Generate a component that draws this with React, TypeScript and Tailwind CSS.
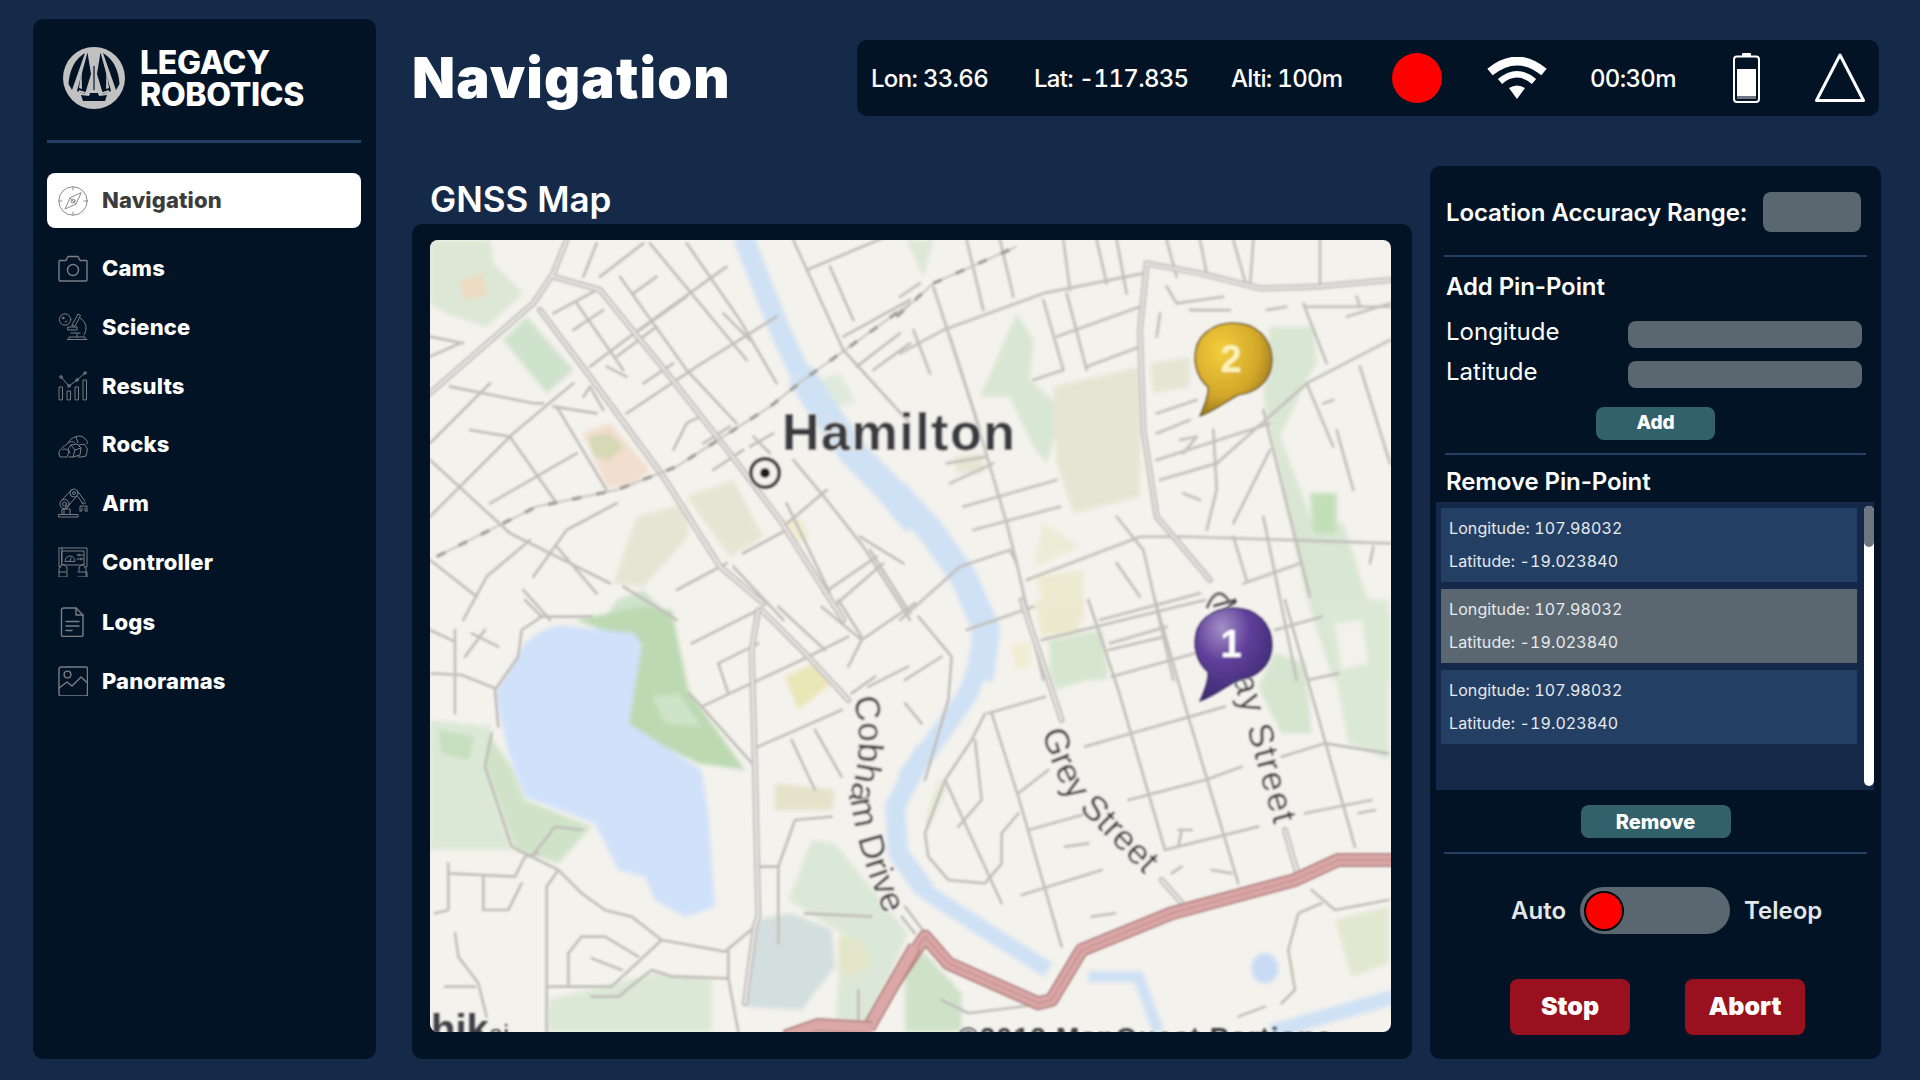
import React from "react";

type Poly = [string, string];
type Region = {
  x: number;
  y: number;
  parks: Poly[];
  water: [string, number][];
  roads: string[];
  doubles: string[];
};

const GREEN = "#d5e5cf";
const BEIGE = "#e6e5d3";

const regions: Region[] = [
  {
    x: 410,
    y: 170,
    parks: [
      ["60,210 240,210 250,280 340,370 230,470 110,430 60,400", "#dce7d5"],
      ["150,330 220,310 230,380 160,390", "#ecdcc4"],
      ["280,510 350,440 490,600 410,670", "#cfe2cc"],
      ["520,790 600,760 720,900 660,950 590,950", "#f1dece"],
      ["535,800 600,790 640,830 600,870 550,860", "#d6d8b6"],
      ["680,1040 830,1000 835,1100 700,1250 610,1240", BEIGE],
      ["830,980 970,930 1060,1100 960,1160", BEIGE],
      ["1120,1060 1170,1040 1200,1100 1160,1120", "#f0ecd0"],
      ["580,1350 620,1290 700,1260 790,1350", "#cfe2cc"],
      ["1190,640 1290,610 1340,700 1240,720", "#dfeadb"],
    ],
    water: [
      ["M1000 200 L1050 330 L1110 480 L1170 610", 62],
      ["M1170 610 L1240 720 L1330 850 L1430 950 L1520 1060", 85],
    ],
    roads: [
      "430,430 560,360", "540,590 700,470 950,290", "570,320 700,220", "650,730 860,590 1100,440",
      "670,370 740,320", "690,480 830,380", "430,710 560,730", "120,650 370,700 400,700",
      "500,400 640,600", "630,320 830,600 980,760", "720,220 1010,570", "830,220 990,450 1100,640",
      "60,820 240,640", "60,1040 310,790 490,640", "60,870 300,1090 600,1240", "300,800 440,1000",
      "240,1000 500,850", "440,710 590,960", "370,1220 470,1080 620,1000", "160,1350 230,1220 360,1110",
      "60,560 150,520", "60,500 160,520", "520,680 540,650 580,720", "790,840 830,760 870,740",
      "1150,210 1300,540 1500,760", "1190,300 1500,170", "1260,290 1330,450", "1300,500 1500,390",
      "1340,590 1470,490", "1390,600 1500,520", "1150,870 1250,990 1360,1130 1500,1350", "1130,1000 1260,1270",
      "1120,1070 1250,960", "1240,1270 1400,1160", "1270,1310 1420,1180", "1350,1100 1480,1180",
      "1380,1140 1500,1330", "1020,830 1090,790", "1030,800 1080,850", "340,1260 420,1350", "940,430 1020,510",
      "800,1260 950,1180", "970,1190 1120,1350", "640,1250 800,1350", "590,590 650,620",
      "490,480 580,420", "620,560 740,470", "700,640 790,580", "880,820 960,770", "910,900 1000,840",
      "560,220 520,320", "60,1170 200,1280", "180,780 300,800", "440,1130 560,1270", "1000,1150 1130,1080",
    ],
    doubles: [
      "430,320 570,360 780,620 960,850 1110,1050 1300,1350",
      "390,420 540,620 760,920 930,1190 1060,1300",
      "60,670 370,400 430,310 470,210",
    ],
  },
  {
    x: 900,
    y: 230,
    parks: [
      ["20,30 100,30 70,140", "#dce7d5"],
      ["350,250 400,330 390,450 490,540 440,700 400,650 330,500 240,500", "#d9e6d3"],
      ["460,470 720,410 720,800 520,850 470,700", BEIGE],
      ["750,400 870,380 870,470 760,490", BEIGE],
      ["1110,290 1240,290 1250,400 1220,450 1140,620 1240,880 1330,880 1400,1100 1470,1150 1470,1350 1300,1350 1220,1100 1090,500", "#d9e6d3"],
      ["1230,790 1310,790 1310,910 1240,910", "#c2dfba"],
      ["410,1040 550,1020 550,1170 440,1210", "#ecebd0"],
      ["430,880 540,950 400,1010", "#ecebd6"],
      ["450,1230 590,1210 620,1350 450,1350", GREEN],
      ["160,680 250,670 250,730 170,730", BEIGE],
    ],
    water: [["M-20 780 L90 900 L190 1040 L260 1200 L240 1350", 80]],
    roads: [
      "0,370 130,300 430,190 730,130", "470,320 720,230", "560,410 720,350", "100,170 220,540 320,880 350,1000 430,1350",
      "150,320 240,600", "430,210 490,420", "500,190 560,420", "490,30 510,180", "590,30 620,160", "400,450 490,420",
      "770,550 890,510", "770,610 870,570", "770,690 1110,580", "780,750 950,700 1220,460 1470,330",
      "940,600 950,780 920,900", "850,790 900,810", "840,630 890,620 850,670", "1000,880 1110,660",
      "1090,540 1230,1100", "1220,460 1300,650", "220,900 480,830", "380,1050 720,920 860,920 1470,940",
      "650,860 730,960 820,1350", "600,1170 900,1090", "630,1240 800,1190", "0,1170 180,1010 330,960 350,1000",
      "1000,920 1040,1050", "1090,860 1190,1350", "1030,1060 1200,1000", "1380,410 1470,700", "1220,230 1470,230",
      "1370,200 1380,230", "1210,220 1280,400", "1310,600 1360,780", "1100,240 1160,230", "870,240 990,240",
      "800,170 830,220 970,200", "1000,30 1040,170", "1060,30 1050,170", "1260,30 1260,170", "780,250 770,320",
      "1270,520 1300,510", "0,200 60,160", "1410,1000 1420,950", "140,700 260,680",
      "200,30 250,240", "300,30 340,200", "650,30 680,190", "800,30 830,140", "900,30 920,130",
      "150,760 280,700", "190,830 470,750", "400,1130 200,1200", "40,300 90,430", "1340,260 1470,220",
      "650,1000 720,1100",
    ],
    doubles: [
      "740,100 720,300 730,600 770,860 930,1050",
      "740,100 900,130 1080,175 1250,170 1470,150",
    ],
  },
  {
    x: 425,
    y: 600,
    parks: [
      ["15,360 200,380 180,500 260,750 15,750", "#dbe8d5"],
      ["40,390 150,410 130,480 50,460", "#c6dfbe"],
      ["190,400 180,500 270,750 400,790 500,680 300,600 260,500", "#d0e3c8"],
      ["450,60 650,20 740,30 790,270 960,510 820,490 700,430 610,380 650,130", "#bcd9b2"],
      ["680,290 760,280 830,380 720,370", "#cfe3c7"],
      ["370,1295 370,1200 690,1120 860,1135 860,1295", "#dbe8d5"],
      ["1090,900 1160,720 1230,730 1450,1000 1320,1295 1230,1295 1250,1000", "#dce8d7"],
      ["990,960 1100,940 1220,990 1230,1100 1130,1230 960,1220", "#d3dfde"],
      ["1240,1010 1310,1020 1340,1090 1280,1130 1240,1110", "#e3e5c8"],
      ["1080,230 1170,190 1220,250 1120,330", "#e9e6b8"],
      ["1050,550 1230,570 1220,630 1050,630", "#e4e2c9"],
    ],
    water: [["M1500 450 L1410 620 L1420 760 L1500 870", 60]],
    roads: [
      "20,220 110,225 210,265", "90,90 90,340", "15,90 90,125", "120,170 180,90", "140,100 220,140",
      "350,50 290,90 280,170 210,270 220,380", "200,400 180,500 260,740 400,810 470,880 540,930 620,950 710,1020 900,1055 990,980",
      "320,770 390,680 470,690", "70,790 70,930 30,940", "70,820 270,830 300,770 340,760", "175,830 175,930 250,930 290,850",
      "365,1295 365,860 400,810", "365,1160 560,1160 710,1020", "430,1160 430,1060 470,1010 540,1010 640,1070", "500,1075 590,1110",
      "500,1190 580,1190 680,1110 740,1130 910,1135", "910,1055 910,1135 940,1295", "90,1000 100,1070 160,1150 185,1250", "60,1160 150,1160",
      "990,800 1060,800 1060,950", "1060,800 1110,660 1220,650", "800,130 1000,30", "880,190 1000,130", "880,190 910,280",
      "830,320 1130,180 1270,110", "790,280 830,320 990,500", "1000,440 1250,330", "1100,420 1170,570", "1170,390 1250,530",
      "1190,20 1310,120 1470,10", "1270,200 1310,120", "1330,260 1450,200", "1280,280 1350,230", "1060,20 1200,150", "1240,0 1310,110",
      "1300,1170 1300,1270", "300,0 350,50 500,50", "1140,940 1340,950", "1060,950 1060,1030", "1430,950 1470,1000",
    ],
    doubles: ["1010,30 1150,170 1270,300", "1000,30 980,150 990,500 1000,950 990,980 960,1210"],
  },
  {
    x: 905,
    y: 600,
    parks: [
      ["430,120 590,90 610,220 450,270", GREEN],
      ["1060,260 1110,160 1200,190 1220,400 1130,400", GREEN],
      ["1250,0 1450,0 1450,480 1330,430", "#dbe8d5"],
      ["1290,70 1370,60 1390,190 1310,210", "#f3f1ec"],
      ["1290,960 1450,920 1450,1090 1340,1130", "#e2e7cf"],
      ["0,1080 60,1060 170,1180 170,1295 0,1295", "#cfe2c8"],
      ["320,130 380,130 370,200 330,210", "#f1edd2"],
      ["390,0 540,0 520,100 410,110", "#ece9cf"],
      ["60,660 100,540 130,560 70,680", "#e5ebd6"],
    ],
    water: [
      ["M210 0 Q260 100 190 280 Q110 400 0 540", 60],
      ["M-20 760 L70 880 L240 990 L430 1110", 48],
      ["M550 1130 L700 1130 L760 1295", 34],
      ["M1100 1295 L1470 1190", 44],
    ],
    roads: [
      "550,0 640,270 780,750", "750,0 850,350 1000,850", "1140,0 1350,740", "260,340 340,590 470,1040", "120,540 290,910",
      "250,340 420,290", "410,120 900,0", "610,150 780,110", "620,230 870,160", "540,440 680,400 960,320", "340,580 430,510",
      "370,690 550,640", "670,600 900,540 1010,500", "780,750 1060,680", "830,690 820,740", "820,690 860,690", "350,885 590,810",
      "1130,470 1260,430 1450,460", "1200,640 1400,600", "1210,240 1300,220", "1110,90 1250,50", "1360,640 1410,630", "560,950 630,940",
      "920,810 980,820", "480,740 550,730", "800,820 830,800", "60,700 120,540 200,420 240,340",
      "60,700 70,770 130,840 240,850 290,790 290,700 340,640", "210,420 230,600 160,680", "0,240 110,170", "40,50 140,170 130,300 60,540",
      "0,310 50,370", "0,920 60,1000", "110,1200 190,1240 430,1210", "1250,910 1180,940 1150,1050 1170,1170 1130,1210", "1220,870 1290,930 1450,900",
      "1000,1250 1080,1220",
    ],
    doubles: ["350,0 470,360", "770,840 840,920", "1140,690 1180,830"],
  },
];

const HIGHWAY =
  "M -30 1145 L 60 1010 L 130 1090 L 400 1210 L 440 1200 L 530 1050 L 800 940 L 1170 840 L 1300 780 L 1470 780";

const bubble =
  "M-38 -3 C-38 -24 -21 -37 1 -37 C23 -37 39 -22 39 0 C39 20 24 33 5 35 C-8 42 -20 52 -33 56 C-28 45 -24 35 -25 27 C-33 20 -38 10 -38 -3 Z";

function Pin({ x, y, fill, edge, label, color }: { x: number; y: number; fill: string; edge: string; label: string; color: string }) {
  return (
    <g transform={`translate(${x} ${y})`}>
      <path d={bubble} fill="#ffffff" fillOpacity={0.55} stroke="#ffffff" strokeOpacity={0.55} strokeWidth={3} />
      <path d={bubble} fill={`url(#${fill})`} stroke={edge} strokeWidth={1.6} />
      <text x={-2} y={12} textAnchor="middle" fontSize={38} fontWeight={700} fill={color} fontFamily="'Liberation Sans', sans-serif">
        {label}
      </text>
    </g>
  );
}

function MapArt() {
  const tf = (r: Region) => `translate(${r.x} ${r.y}) scale(0.3333)`;
  return (
    <svg viewBox="430 240 962 792" className="block h-[792px] w-[962px]" fontFamily="'Liberation Sans', sans-serif">
      <defs>
        <filter id="soft" x="400" y="210" width="1020" height="860" filterUnits="userSpaceOnUse">
          <feGaussianBlur stdDeviation="1" />
        </filter>
        <filter id="softer" x="400" y="210" width="1020" height="860" filterUnits="userSpaceOnUse">
          <feGaussianBlur stdDeviation="2" />
        </filter>
        <radialGradient id="gold" cx="0.35" cy="0.3" r="0.8">
          <stop offset="0" stopColor="#f3cf3c" />
          <stop offset="0.6" stopColor="#d2a72a" />
          <stop offset="1" stopColor="#8c6e1e" />
        </radialGradient>
        <radialGradient id="violet" cx="0.35" cy="0.22" r="0.8">
          <stop offset="0" stopColor="#a590c8" />
          <stop offset="0.45" stopColor="#5f3f9a" />
          <stop offset="1" stopColor="#3d2a70" />
        </radialGradient>
      </defs>
      <rect x="430" y="240" width="962" height="792" fill="#f4f2ed" />
      <g filter="url(#softer)">
        {regions.map((r, i) => (
          <g key={i} transform={tf(r)}>
            {r.parks.map(([p, c], j) => (
              <polygon key={j} points={p} fill={c} />
            ))}
            {r.water.map(([d, w], j) => (
              <path key={j} d={d} fill="none" stroke="#cfe1f5" strokeWidth={w} strokeLinejoin="round" />
            ))}
          </g>
        ))}
        <g transform="translate(425 600) scale(0.3333)">
          <path
            d="M300 130 Q380 60 440 80 L630 100 650 140 610 370 830 510 850 640 870 920 780 950 690 900 660 830 580 810 510 670 300 590 250 460 210 280 Z"
            fill="#d0e1fa"
          />
        </g>
        <g transform="translate(905 600) scale(0.3333)">
          <ellipse cx="1080" cy="1105" rx="40" ry="45" fill="#c8daf4" />
        </g>
      </g>
      <g filter="url(#soft)">
        {regions.map((r, i) => (
          <g key={i} transform={tf(r)} fill="none" strokeLinejoin="round" strokeLinecap="round">
            {r.roads.map((p, j) => (
              <polyline key={j} points={p} stroke="#c2bfba" strokeWidth={8} />
            ))}
            {r.doubles.map((p, j) => (
              <polyline key={j} points={p} stroke="#c2bfbc" strokeWidth={18} />
            ))}
            {r.doubles.map((p, j) => (
              <polyline key={j} points={p} stroke="#efedea" strokeWidth={6} />
            ))}
          </g>
        ))}
        <g transform="translate(410 170) scale(0.3333)" fill="none">
          <polyline points="80,1160 380,1010 620,960 800,890 1080,710 1180,630 1500,400" stroke="#c8c5c0" strokeWidth={6} />
          <polyline points="80,1160 380,1010 620,960 800,890 1080,710 1180,630 1500,400" stroke="#a09e9a" strokeWidth={10} strokeDasharray="28 46" />
        </g>
        <g transform="translate(900 230) scale(0.3333)" fill="none">
          <polyline points="-10,260 100,160 350,50" stroke="#c8c5c0" strokeWidth={6} />
          <polyline points="-10,260 100,160 350,50" stroke="#a09e9a" strokeWidth={10} strokeDasharray="28 46" />
        </g>
        <g transform="translate(905 600) scale(0.3333)" fill="none" strokeLinejoin="round">
          <path d={HIGHWAY} stroke="#b58888" strokeWidth={42} />
          <path d={HIGHWAY} stroke="#dca8a7" strokeWidth={30} />
          <path d={HIGHWAY} stroke="#c99696" strokeWidth={7} />
        </g>
        <g transform="translate(425 600) scale(0.3333)" fill="none" strokeLinejoin="round">
          <path d="M1470 1040 L1330 1285" stroke="#b58888" strokeWidth={42} />
          <path d="M1470 1040 L1330 1285" stroke="#dca8a7" strokeWidth={30} />
          <path d="M1080 1310 L1180 1275 L1340 1285" stroke="#b58888" strokeWidth={42} />
          <path d="M1080 1310 L1180 1275 L1340 1285" stroke="#dca8a7" strokeWidth={30} />
        </g>
        <circle cx="765" cy="473" r="14" fill="#f4f2ed" stroke="#3c3c3c" strokeWidth={3.5} />
        <circle cx="765" cy="473" r="5" fill="#1d1d1d" />
        <text x="782" y="450" fontSize={52} fontWeight={700} fill="#373a3f" letterSpacing="1.5" stroke="#f4f2ed" strokeWidth={2} paintOrder="stroke">
          Hamilton
        </text>
        <g fontSize={35} fill="#3a3c40" stroke="#f4f2ed" strokeWidth={2.5} paintOrder="stroke">
          <path id="cobham" d="M853 698 Q866 745 850 795 Q858 860 890 925" fill="none" stroke="none" />
          <path id="grey" d="M1042 732 Q1058 790 1080 810 L1160 890" fill="none" stroke="none" />
          <path id="murray" d="M1212 602 L1276 832" fill="none" stroke="none" />
          <text>
            <textPath href="#cobham">Cobham Drive</textPath>
          </text>
          <text>
            <textPath href="#grey">Grey Street</textPath>
          </text>
          <text letterSpacing="1.6">
            <textPath href="#murray">Murray Street</textPath>
          </text>
        </g>
        <path d="M1207 608 Q1218 580 1232 606" fill="none" stroke="#6c6c6c" strokeWidth={3} />
        <text x="431" y="1043" fontSize={40} fontWeight={700} fill="#3a3d42">
          hik<tspan fontSize={26} fontWeight={400}>ai</tspan>
        </text>
        <text x="958" y="1047" fontSize={28} fontWeight={700} fill="#383b3f" letterSpacing="1.2">
          ©2012 MapQuest Portions
        </text>
      </g>
      <g filter="url(#soft)">
        <Pin x={1233} y={360} fill="gold" edge="#6f5a1c" label="2" color="#fdf3bd" />
        <Pin x={1233} y={645} fill="violet" edge="#3a2a66" label="1" color="#ffffff" />
      </g>
    </svg>
  );
}

const iconBase = "h-[30px] w-[30px] shrink-0";

function I({ children, active }: { children: React.ReactNode; active?: boolean }) {
  return (
    <svg viewBox="0 0 30 30" className={iconBase} fill="none" stroke={active ? "#8b8b8b" : "#7b7e82"} strokeWidth={1} strokeLinecap="round" strokeLinejoin="round">
      {children}
    </svg>
  );
}

const icons: Record<string, React.ReactNode> = {
  Navigation: (
    <>
      <circle cx="15" cy="15" r="14.2" />
      <path d="M15 1v3M15 26v3M1 15h3M26 15h3" />
      <path d="M23 7 L18 18 L7 23 L12 12 Z" />
      <path d="M12 12 L18 18" />
      <circle cx="15" cy="15" r="2" />
    </>
  ),
  Cams: (
    <g strokeWidth={1.4}>
      <path d="M1.5 7.5 H8 L10 3.5 H20 L22 7.5 H28.5 A1 1 0 0 1 29 8.5 V27 A1 1 0 0 1 28 28 H2 A1 1 0 0 1 1 27 V8.5 A1 1 0 0 1 1.5 7.5 Z" />
      <circle cx="15" cy="17" r="5.5" />
    </g>
  ),
  Science: (
    <>
      <circle cx="7" cy="7.5" r="5.7" />
      <circle cx="5" cy="6" r="1" />
      <path d="M7 10 l2 -1" />
      <path d="M14 13 L20 2 L22.5 3.5 L17 14 Z" />
      <path d="M22 6 C28 9 30 17 26 23" />
      <path d="M10 15 H19 V18 H10 Z" />
      <path d="M13 21 H22 M9 27.5 H29 M11 27.5 V25 H27 V27.5 M19 25 V22" />
    </>
  ),
  Results: (
    <>
      <path d="M1 28.5 V16 H4.5 V28.5 Z M9 28.5 V20 H12.5 V28.5 Z M17 28.5 V16 H20.5 V28.5 Z M25 28.5 V9 H28.5 V28.5 Z" />
      <path d="M3 6 L11 15 L19 9 L27 2" />
      <circle cx="3" cy="6" r="1.3" />
      <circle cx="11" cy="15" r="1.3" />
      <circle cx="19" cy="9" r="1.3" />
      <circle cx="27" cy="2" r="1.3" />
    </>
  ),
  Rocks: (
    <>
      <path d="M1 25 C0 20 6 18 9 15 C11 12 16 12 17 14" />
      <path d="M1 25 L2 28 H9 L11 23 C10 20 6 19 4 21" />
      <path d="M10 14 C12 8 24 4 27 10 C29 11 30 13 29 15" />
      <path d="M12 24 L10 20 L13 16 L19 15 L23 19 L22 26 L15 28 H11" />
      <path d="M21 16 L26 15 L29.5 20 L28 27 L23 28 H20" />
      <path d="M18 8 L20 14 M13 16 L17 21 L23 19 M17 21 L15 28" />
    </>
  ),
  Arm: (
    <>
      <path d="M1 29 H20 V26.5 H1 Z" />
      <path d="M4 26.5 V21 H12 V26.5 M6 26.5 V21 M8 21 V17" />
      <circle cx="6.5" cy="16" r="4.6" />
      <circle cx="6.5" cy="16" r="2" />
      <circle cx="16" cy="5" r="4" />
      <circle cx="16" cy="5" r="1.5" />
      <path d="M3.5 12.5 L13 2.5 M9 19 L19 8" />
      <path d="M19 2.5 L27 13 M19.5 8 L25 16" />
      <path d="M24 15 H27.5 M22 23 V18 H29 V23 M22 23 H24 V20 M29 23 H27 V20" />
    </>
  ),
  Controller: (
    <>
      <path d="M1 1 H29 V20 H27 M3 20 H1 V1 M4 1 V15" />
      <rect x="4" y="4" width="22" height="14" />
      <path d="M7 14 A5 5 0 0 1 17 14 Z" />
      <path d="M12 14 L13 11" />
      <path d="M19 8 H25 M19 12 H25 M21 7 V9 M23 11 V13" />
      <path d="M1 30 V23 C1 20 3 18 5 17 L9 20 V24 M1 25 H9 V30 H1 M28 30 V22 L25 17 L21 20 V24 M20 25 H29 V30 H20" />
    </>
  ),
  Logs: (
    <g strokeWidth={1.4}>
      <path d="M5.5 1 H18 L25 8 V28 A1.5 1.5 0 0 1 23.5 29.5 H5.5 A2 2 0 0 1 3.5 28 V3 A2 2 0 0 1 5.5 1 Z" />
      <path d="M18 1 V8 H25" />
      <path d="M8 14.5 H21 M8 19 H21 M8 23.5 H14" />
    </g>
  ),
  Panoramas: (
    <g strokeWidth={1.4}>
      <rect x="1" y="1" width="28.5" height="29" rx="2" />
      <circle cx="9.5" cy="8.5" r="3.4" />
      <path d="M1 22 L9 16 L14 20 L23 11 L29.5 17" />
    </g>
  ),
};

const navRows: [string, string][] = [
  ["Cams", "mt-[25px]"],
  ["Science", "mt-[29px]"],
  ["Results", "mt-[29px]"],
  ["Rocks", "mt-[28px]"],
  ["Arm", "mt-[29px]"],
  ["Controller", "mt-[29px]"],
  ["Logs", "mt-[30px]"],
  ["Panoramas", "mt-[29px]"],
];

const H = "font-['Inter','Liberation_Sans',sans-serif]";
const R = "font-['Inter','Liberation_Sans',sans-serif]";

function PinRow({ selected }: { selected?: boolean }) {
  return (
    <div className={`h-[74px] w-[416px] pl-[8px] pt-[4px] text-[16px] leading-[33px] tabular-nums tracking-[0.1px] text-[#e6eaee] ${selected ? "bg-[#5a6770]" : "bg-[#243f64]"}`}>
      <div>Longitude: 107.98032</div>
      <div>Latitude: -19.023840</div>
    </div>
  );
}

function Logo() {
  return (
    <svg viewBox="-32 -32 64 64" className="h-[64px] w-[64px] shrink-0">
      <circle r="31" fill="#c1c1c1" />
      <g fill="#021326">
        <path d="M-9 -25 Q-24 -16 -25.5 6 L-22 12 Z" />
        <path d="M9 -25 Q24 -16 25.5 6 L22 12 Z" />
        <path d="M-6.5 -25.5 L-17 13 L-9 16 L-3 -4 Z" fill="#021326" />
        <path d="M6.5 -25.5 L17 13 L9 16 L3 -4 Z" fill="#021326" />
        <path d="M-13 17 L-5 18 V15 H5 V18 L13 17 L11 23 H-11 Z" />
      </g>
      <g fill="#c1c1c1">
        <path d="M-12.5 -8 L-15 10 L-12 11 Z" />
        <path d="M12.5 -8 L15 10 L12 11 Z" />
        <path d="M-1.8 -22 H1.8 L2.6 15 H-2.6 Z" />
        <path d="M-15 12 L-4 15.5 V17 L-15 14 Z" />
        <path d="M15 12 L4 15.5 V17 L15 14 Z" />
      </g>
      <path d="M0 -12 V12" stroke="#021326" strokeWidth={1.2} />
    </svg>
  );
}

export default function App() {
  return (
    <div className={`flex h-[1080px] w-[1920px] overflow-hidden bg-[#142a48] pl-[33px] pt-[19px] text-white ${R}`}>
      <aside className="h-[1040px] w-[343px] rounded-[10px] bg-[#021326] pl-[14px] pr-[15px]">
        <div className="flex h-[124px] items-center border-b-[3px] border-[#243f64] pb-[4px] pl-[15px]">
          <Logo />
          <div className={`ml-[14px] mt-[2px] text-[32px] font-extrabold leading-[32px] tracking-[-0.3px] text-white ${H}`}>
            <div>LEGACY</div>
            <div>ROBOTICS</div>
          </div>
        </div>
        <nav className="mt-[30px]">
          <div className="flex h-[55px] items-center rounded-[8px] bg-white pl-[11px]">
            <I active>{icons.Navigation}</I>
            <span className={`ml-[14px] text-[22px] font-extrabold tracking-[0.15px] text-[#3c3c3c] ${H}`}>Navigation</span>
          </div>
          {navRows.map(([name, m]) => (
            <div key={name} className={`flex h-[30px] items-center pl-[11px] ${m}`}>
              <I>{icons[name]}</I>
              <span className={`ml-[14px] text-[22px] font-extrabold tracking-[0.15px] text-white ${H}`}>{name}</span>
            </div>
          ))}
        </nav>
      </aside>

      <div className="ml-[36px] flex w-[1469px] flex-col">
        <header className="flex h-[97px] shrink-0 items-start">
          <h1 className={`mt-[20px] text-[56px] font-black leading-[78px] tracking-[1.15px] text-white ${H}`}>Navigation</h1>
          <div className="ml-auto mr-[2px] mt-[21px] flex h-[76px] w-[1022px] items-center rounded-[10px] bg-[#021326] pl-[14px] text-[24px] font-medium tabular-nums tracking-[-0.7px]">
            <span className="w-[163px] pt-[2px]">Lon: 33.66</span>
            <span className="w-[197px] pt-[2px]">Lat: -117.835</span>
            <span className="w-[161px] pt-[2px]">Alti: 100m</span>
            <span className="h-[50px] w-[50px] rounded-full bg-[#ff0000]" />
            <svg viewBox="0 0 60 42" className="ml-[45px] h-[42px] w-[60px]" fill="none" stroke="#fff" strokeLinecap="butt">
              <path d="M3 15 Q30 -7 57 15" strokeWidth={8.5} />
              <path d="M13 24.5 Q30 10 47 24.5" strokeWidth={6.5} />
              <path d="M22 31 Q30 26 38 31 L30 42 Z" fill="#fff" stroke="none" />
            </svg>
            <span className="ml-[43px] w-[86px] pt-[2px]">00:30m</span>
            <svg viewBox="0 0 27 50" className="ml-[57px] h-[50px] w-[27px]" fill="none">
              <rect x="1" y="3.5" width="25" height="45.5" rx="3" stroke="#fff" strokeWidth={2} />
              <rect x="9" y="0" width="9" height="4" rx="1" fill="#fff" />
              <rect x="4" y="16" width="19" height="27" fill="#fff" />
              <rect x="4" y="43" width="19" height="3" fill="#6b7680" />
            </svg>
            <svg viewBox="0 0 50 50" className="ml-[55px] h-[50px] w-[50px]" fill="none">
              <path d="M25 2 L48.5 47.5 H1.5 Z" stroke="#fff" strokeWidth={3} strokeLinejoin="round" />
            </svg>
          </div>
        </header>

        <div className="mt-[50px] flex">
          <section className="w-[1000px]">
            <h2 className="flex h-[58px] items-center pl-[18px] pt-[9px] text-[35px] font-semibold leading-none text-white">GNSS Map</h2>
            <div className="h-[835px] rounded-[10px] bg-[#021326] pl-[18px] pt-[16px]">
              <div className="h-[792px] w-[961px] overflow-hidden rounded-[8px]">
                <MapArt />
              </div>
            </div>
          </section>

          <section className="ml-[18px] h-[893px] w-[451px] rounded-[10px] bg-[#021326]">
            <div className="flex pl-[16px] pt-[26px]">
              <span className="flex h-[40px] items-center pt-[2px] text-[24px] font-semibold leading-none tracking-[-0.1px]">Location Accuracy Range:</span>
              <span className="ml-auto mr-[20px] h-[40px] w-[98px] rounded-[8px] bg-[#5a6770]" />
            </div>
            <div className="mx-[14px] mt-[23px] h-[2px] bg-[#243f64]" />
            <div className="mt-[17px] flex h-[24px] items-center pl-[16px] pt-[2px] text-[24px] font-semibold leading-none tracking-[-0.1px]">Add Pin-Point</div>
            <div className="mt-[23px] flex h-[27px] items-center pl-[16px] text-[24px] leading-none">
              <span className="pb-[5px]">Longitude</span>
              <span className="ml-auto mr-[19px] h-[27px] w-[234px] rounded-[8px] bg-[#5a6770]" />
            </div>
            <div className="mt-[13px] flex h-[27px] items-center pl-[16px] text-[24px] leading-none">
              <span className="pb-[5px]">Latitude</span>
              <span className="ml-auto mr-[19px] h-[27px] w-[234px] rounded-[8px] bg-[#5a6770]" />
            </div>
            <div className="mt-[19px] flex justify-center">
              <button className={`h-[33px] w-[119px] rounded-[8px] bg-[#32616c] text-[19px] font-extrabold text-white ${H}`}>Add</button>
            </div>
            <div className="mx-[15px] mt-[13px] h-[2px] bg-[#243f64]" />
            <div className="mt-[15px] flex h-[24px] items-center pl-[16px] text-[24px] font-semibold leading-none tracking-[-0.1px]">Remove Pin-Point</div>
            <div className="ml-[6px] mr-[7px] mt-[8px] flex h-[288px] bg-[#14294a] pl-[5px] pt-[6px]">
              <div className="flex w-[416px] flex-col gap-[7px]">
                <PinRow />
                <PinRow selected />
                <PinRow />
              </div>
              <div className="ml-[7px] mt-[-2px] h-[280px] w-[10px] rounded-full bg-white">
                <div className="h-[41px] w-[10px] rounded-full bg-[#6b7680]" />
              </div>
            </div>
            <div className="mt-[15px] flex justify-center">
              <button className={`h-[33px] w-[150px] rounded-[8px] bg-[#32616c] text-[20px] font-extrabold text-white ${H}`}>Remove</button>
            </div>
            <div className="mx-[14px] mt-[14px] h-[2px] bg-[#243f64]" />
            <div className="mt-[33px] flex h-[47px] items-center pl-[81px] text-[24px] font-semibold text-[#e3e6ea]">
              <span className="w-[54px]">Auto</span>
              <span className="ml-[15px] flex h-[47px] w-[150px] items-center rounded-full bg-[#5a6770] pl-[4px]">
                <span className="h-[40px] w-[40px] rounded-full border-[2px] border-black bg-[#ff0000]" />
              </span>
              <span className="ml-[14px]">Teleop</span>
            </div>
            <div className="mt-[45px] flex pl-[80px]">
              <button className={`h-[56px] w-[120px] rounded-[8px] bg-[#99111e] text-[25px] font-black text-white ${H}`}>Stop</button>
              <button className={`ml-[55px] h-[56px] w-[120px] rounded-[8px] bg-[#99111e] text-[25px] font-black text-white ${H}`}>Abort</button>
            </div>
          </section>
        </div>
      </div>
    </div>
  );
}
